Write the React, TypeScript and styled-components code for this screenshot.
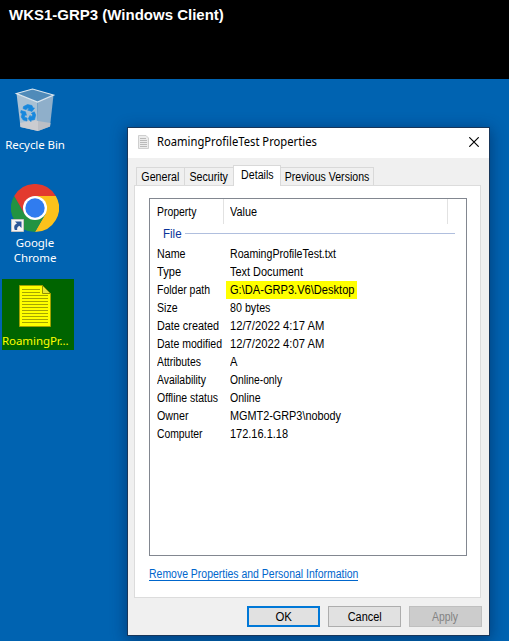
import React from 'react';
import styled, { createGlobalStyle } from 'styled-components';

const GlobalStyle = createGlobalStyle`
  * { box-sizing: border-box; }
  body { margin: 0; background: #000; overflow: hidden; }
`;

const Screen = styled.main`
  display: flex;
  flex-direction: column;
  width: 509px;
  height: 641px;
  font: 12px/14px "Liberation Sans", Arial, sans-serif;
  color: #000;
`;

const Banner = styled.header`
  flex: 0 0 79px;
  padding: 5px 0 0 9px;
  background: #000;
  color: #fff;
  font-size: 15px;
  font-weight: bold;
  line-height: 20px;
`;

const Desktop = styled.section`
  flex: 1;
  display: flex;
  align-items: flex-start;
  background: #0063b1;
`;

const Shortcuts = styled.nav`
  display: flex;
  flex-direction: column;
  flex: 0 0 128px;
  padding-top: 7px;
  font: 11.5px/15px "Noto Sans", "Segoe UI", sans-serif;
  letter-spacing: -0.08px;
  color: #fff;
`;

const Shortcut = styled.div<{ $gap: number }>`
  display: flex;
  flex-direction: column;
  align-items: center;
  width: 70px;
  margin-bottom: ${p => p.$gap}px;
  text-align: center;
`;

const SelectedShortcut = styled.div`
  display: flex;
  flex-direction: column;
  width: 72px;
  height: 71px;
  margin-left: 2px;
  padding-top: 4px;
  background: #006400;
  color: #ff0;
  white-space: nowrap;
  svg { margin-left: 9px; }
`;

const ShortcutLabel = styled.span<{ $gap?: number }>`
  margin-top: ${p => p.$gap ?? 3}px;
`;

const Dialog = styled.section`
  display: flex;
  flex-direction: column;
  width: 361px;
  height: 507px;
  margin-top: 49px;
  background: #f0f0f0;
  box-shadow: 0 0 0 1px #17365a, 0 3px 14px 2px rgba(0, 20, 60, 0.45);
`;

const TitleBar = styled.header`
  display: flex;
  align-items: center;
  flex: 0 0 30px;
  padding: 0 10px 2px 10px;
  background: #fff;
`;

const Title = styled.h1`
  flex: 1;
  margin: 0 0 0 8px;
  font: 12px/16px "Noto Sans", "Segoe UI", sans-serif;
  transform: scaleX(0.935);
  transform-origin: left;
  white-space: nowrap;
`;

const Tabs = styled.div`
  display: flex;
  align-items: flex-end;
  flex: 0 0 27px;
  padding-left: 8px;
`;

const Tab = styled.div<{ $width: number; $active?: boolean }>`
  display: flex;
  justify-content: center;
  width: ${p => p.$width}px;
  height: ${p => (p.$active ? 21 : 18)}px;
  margin-bottom: ${p => (p.$active ? -1 : 0)}px;
  padding-top: 2px;
  border: 1px solid #d9d9d9;
  border-bottom: 0;
  background: ${p => (p.$active ? '#fff' : '#f0f0f0')};
  white-space: nowrap;
  z-index: ${p => (p.$active ? 1 : 0)};
  & + & { margin-left: -1px; }
`;

const Panel = styled.div`
  display: flex;
  flex-direction: column;
  flex: 0 0 413px;
  margin: 0 8px 0 6px;
  padding: 12px 13px 0 14px;
  border: 1px solid #dcdcdc;
  background: #fff;
`;

const PropertyList = styled.div`
  display: flex;
  flex-direction: column;
  flex: 0 0 358px;
  border: 1px solid #828790;
`;

const ListHeader = styled.div`
  display: flex;
  flex: 0 0 25px;
`;

const HeaderCell = styled.div<{ $width: number; $pad: number }>`
  width: ${p => p.$width}px;
  padding: 6px 0 0 ${p => p.$pad}px;
  border-right: 1px solid #e2e2e2;
`;

const GroupHeading = styled.div`
  display: flex;
  align-items: center;
  flex: 0 0 21px;
  gap: 3px;
  padding: 0 11px 2px 13px;
  color: #0a3399;
  &::after { content: ''; flex: 1; height: 1px; background: #b0bfde; }
`;

const PropertyRow = styled.div`
  display: flex;
  align-items: center;
  flex: 0 0 18px;
  white-space: nowrap;
`;

const PropertyName = styled.span`
  width: 76px;
  padding-left: 7px;
`;

const PropertyValue = styled.span<{ $marked?: boolean }>`
  width: ${p => (p.$marked ? '131px' : 'auto')};
  padding-left: 4px;
  line-height: 18px;
  background: ${p => (p.$marked ? '#ff0' : 'transparent')};
`;

/* Condensed UI text; $x is the horizontal scale of the run. */
const Fitted = styled.span<{ $x: number; $center?: boolean }>`
  display: inline-block;
  transform: scaleX(${p => p.$x});
  transform-origin: ${p => (p.$center ? 'center' : 'left')};
`;

const RemoveLink = styled.a`
  width: 209px;
  height: 13px;
  margin-top: 12px;
  border-bottom: 1px solid #0066cc;
  color: #0066cc;
  line-height: 12px;
  white-space: nowrap;
`;

const Actions = styled.footer`
  display: flex;
  justify-content: flex-end;
  gap: 8px;
  padding: 8px 7px 0 0;
`;

const Button = styled.button<{ $kind?: 'default' | 'disabled' }>`
  width: 73px;
  height: 21px;
  padding: 0;
  border: ${p => (p.$kind === 'default' ? '2px solid #0078d7' : p.$kind === 'disabled' ? '1px solid #bfbfbf' : '1px solid #adadad')};
  background: ${p => (p.$kind === 'disabled' ? '#ccc' : '#e1e1e1')};
  color: ${p => (p.$kind === 'disabled' ? '#838383' : '#000')};
  font: inherit;
`;

const RecycleBinIcon = () => (
  <svg width="48" height="48" viewBox="0 0 48 48">
    <path d="M5.500 7.500 26.500 16 27 45 9.500 41Z" fill="#a9c1d4" />
    <path d="M26.500 16 42.500 9 39 40.500 27 45Z" fill="#8fafca" />
    <path d="M9 37 24 34 27 35V45L9.500 41Z" fill="#cbccd0" />
    <path d="M27 35 39.500 37 39 40.500 27 45Z" fill="#bcbfc5" />
    <path d="M5.500 7.500 21.500 3 42.500 9 26.500 16Z" fill="#508bb9" stroke="#dce7ef" strokeWidth="1.200" />
    <path d="m12.500 20.500 4-2 4.500 1 1 2.500 1.500 0-2.500 3.500-4.500-1.500 1.500-.7-1-1.500-2 2-3-1.300ZM10 24.500l4.500 1.300 1 3.500-1.500-.3-.5 2.200 2.500.8v3l-3.800-1-2-3 1-3.500-1.500-.5ZM19.200 30.500l2-.3.3-1.700-1.200-1.200 3-1.500 1.400 3.200-1.200 4.700-3.500.6v1.400l-2.800-3 2-3.400Z" fill="#1888dd" stroke="#1888dd" strokeWidth="0.600" />
  </svg>
);

const ChromeIcon = () => (
  <svg width="48" height="48" viewBox="0 0 48 48">
    <path d="M24 12H44.800A24 24 0 0 1 24 48L34.400 30Z" fill="#fcc21b" />
    <path d="M3.200 12A24 24 0 0 0 24 48L34.400 30 24 24 13.600 30Z" fill="#229342" />
    <path d="M3.200 12A24 24 0 0 1 44.800 12H24L13.600 30Z" fill="#e33b2e" />
    <circle cx="24" cy="24" r="12" fill="#fff" />
    <circle cx="24" cy="24" r="9.700" fill="#307cef" />
    <path d="M.5 35.500h12v12H.5z" fill="#f4f4f4" stroke="#c3c3c3" />
    <path d="M4 37.500h6.500V44L8.300 41.800C6 43.200 6 44.300 6.200 46H3.800C2.500 42.500 3.500 40.500 6 39.500Z" fill="#2b5797" />
  </svg>
);

const lineOffsets = [6, 9, 12, 15, 18, 21, 24, 27, 30, 33, 36, 39];

const TextFileIcon = () => (
  <svg width="48" height="48" viewBox="0 0 48 48">
    <path d="M8.500 2.500h23l8 8v33h-31z" fill="#ff0" stroke="#a0a000" />
    <path d="M31.500 2.500v8h8Z" fill="#e4e43b" stroke="#929200" />
    {lineOffsets.map(y => (
      <path key={y} d={`M11 ${y + 0.5}h${y < 12 ? 18 : 26}`} stroke="#a5a500" />
    ))}
  </svg>
);

const SmallFileIcon = () => (
  <svg width="11" height="14" viewBox="0 0 11 14">
    <path d="M.5.5h7.500l2.500 2.500v10.500H.5Z" fill="#ececec" stroke="#cfcfcf" />
    <path d="M2 3.500h6M2 5.500h7M2 7.500h7M2 9.500h7M2 11.500h7" stroke="#bababa" />
  </svg>
);

const CloseIcon = () => (
  <svg width="10" height="10" viewBox="0 0 10 10">
    <path d="m.3.3 9.400 9.400M9.700.3.3 9.700" stroke="#000" strokeWidth="1.150" />
  </svg>
);

interface Property {
  name: string;
  value: string;
  nameX: number;
  valueX: number;
  marked?: boolean;
}

const properties: Property[] = [
  { name: 'Name', nameX: 0.89, value: 'RoamingProfileTest.txt', valueX: 0.883 },
  { name: 'Type', nameX: 0.925, value: 'Text Document', valueX: 0.912 },
  { name: 'Folder path', nameX: 0.873, value: 'G:\\DA-GRP3.V6\\Desktop', valueX: 0.924, marked: true },
  { name: 'Size', nameX: 0.88, value: '80 bytes', valueX: 0.892 },
  { name: 'Date created', nameX: 0.902, value: '12/7/2022 4:17 AM', valueX: 0.936 },
  { name: 'Date modified', nameX: 0.878, value: '12/7/2022 4:07 AM', valueX: 0.936 },
  { name: 'Attributes', nameX: 0.868, value: 'A', valueX: 0.93 },
  { name: 'Availability', nameX: 0.867, value: 'Online-only', valueX: 0.857 },
  { name: 'Offline status', nameX: 0.874, value: 'Online', valueX: 0.88 },
  { name: 'Owner', nameX: 0.892, value: 'MGMT2-GRP3\\nobody', valueX: 0.905 },
  { name: 'Computer', nameX: 0.863, value: '172.16.1.18', valueX: 0.915 },
];

export default function App() {
  return (
    <Screen>
      <GlobalStyle />
      <Banner>WKS1-GRP3 (Windows Client)</Banner>
      <Desktop>
        <Shortcuts>
          <Shortcut $gap={32}>
            <RecycleBinIcon />
            <ShortcutLabel>Recycle Bin</ShortcutLabel>
          </Shortcut>
          <Shortcut $gap={14}>
            <ChromeIcon />
            <ShortcutLabel>Google<br />Chrome</ShortcutLabel>
          </Shortcut>
          <SelectedShortcut>
            <TextFileIcon />
            <ShortcutLabel $gap={2}>RoamingPr...</ShortcutLabel>
          </SelectedShortcut>
        </Shortcuts>
        <Dialog>
          <TitleBar>
            <SmallFileIcon />
            <Title>RoamingProfileTest Properties</Title>
            <CloseIcon />
          </TitleBar>
          <Tabs>
            <Tab $width={49}><Fitted $x={0.89} $center>General</Fitted></Tab>
            <Tab $width={50}><Fitted $x={0.89} $center>Security</Fitted></Tab>
            <Tab $width={48} $active><Fitted $x={0.885} $center>Details</Fitted></Tab>
            <Tab $width={94}><Fitted $x={0.88} $center>Previous Versions</Fitted></Tab>
          </Tabs>
          <Panel>
            <PropertyList>
              <ListHeader>
                <HeaderCell $width={74} $pad={7}><Fitted $x={0.87}>Property</Fitted></HeaderCell>
                <HeaderCell $width={224} $pad={6}><Fitted $x={0.905}>Value</Fitted></HeaderCell>
              </ListHeader>
              <GroupHeading><Fitted $x={0.96}>File</Fitted></GroupHeading>
              {properties.map(p => (
                <PropertyRow key={p.name}>
                  <PropertyName><Fitted $x={p.nameX}>{p.name}</Fitted></PropertyName>
                  <PropertyValue $marked={p.marked}><Fitted $x={p.valueX}>{p.value}</Fitted></PropertyValue>
                </PropertyRow>
              ))}
            </PropertyList>
            <RemoveLink><Fitted $x={0.872}>Remove Properties and Personal Information</Fitted></RemoveLink>
          </Panel>
          <Actions>
            <Button $kind="default"><Fitted $x={0.95} $center>OK</Fitted></Button>
            <Button><Fitted $x={0.91} $center>Cancel</Fitted></Button>
            <Button $kind="disabled"><Fitted $x={0.867} $center>Apply</Fitted></Button>
          </Actions>
        </Dialog>
      </Desktop>
    </Screen>
  );
}
